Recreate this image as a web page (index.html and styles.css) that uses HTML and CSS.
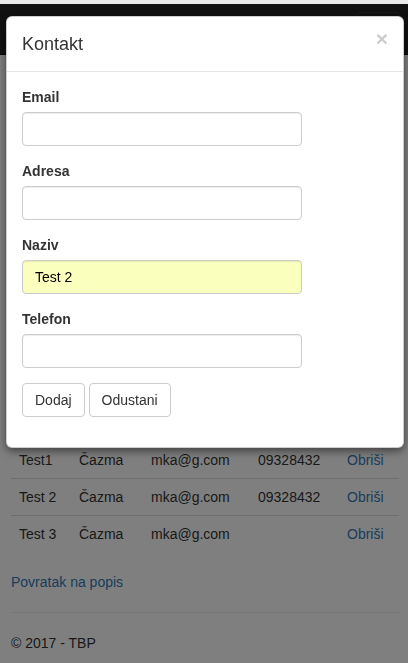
FILE: index.html
```html
<!DOCTYPE html>
<html lang="hr">
<head>
<meta charset="utf-8">
<title>Kontakt</title>
<link rel="stylesheet" href="styles.css">
</head>
<body class="modal-open">
<div class="topstrip"></div>
<nav class="navbar">
  <button class="navbar-toggle" type="button">
    <span class="icon-bar"></span><span class="icon-bar"></span><span class="icon-bar"></span>
  </button>
</nav>
<main class="container">
  <table class="table">
    <colgroup>
      <col class="c1"><col class="c2"><col class="c3"><col class="c4"><col>
    </colgroup>
    <thead>
      <tr><th>Naziv</th><th>Adresa</th><th>Email</th><th>Telefon</th><th></th></tr>
    </thead>
    <tbody>
      <tr><td>Test1</td><td>Čazma</td><td>mka@g.com</td><td>09328432</td><td><a href="#">Obriši</a></td></tr>
      <tr><td>Test 2</td><td>Čazma</td><td>mka@g.com</td><td>09328432</td><td><a href="#">Obriši</a></td></tr>
      <tr><td>Test 3</td><td>Čazma</td><td>mka@g.com</td><td></td><td><a href="#">Obriši</a></td></tr>
    </tbody>
  </table>
  <p class="back"><a href="#">Povratak na popis</a></p>
  <hr class="divider">
  <footer class="footer"><p>© 2017 - TBP</p></footer>
</main>
<div class="backdrop"></div>
<div class="modal">
  <div class="modal-header">
    <h4 class="modal-title">Kontakt</h4>
    <button class="close" type="button">×</button>
  </div>
  <form class="modal-body">
    <div class="form-group">
      <label class="control-label">Email</label>
      <input class="form-control" type="text">
    </div>
    <div class="form-group">
      <label class="control-label">Adresa</label>
      <input class="form-control" type="text">
    </div>
    <div class="form-group">
      <label class="control-label">Naziv</label>
      <input class="form-control autofilled" type="text" value="Test 2">
    </div>
    <div class="form-group">
      <label class="control-label">Telefon</label>
      <input class="form-control" type="text">
    </div>
    <div class="form-group actions">
      <button class="btn" type="button">Dodaj</button>
      <button class="btn" type="button">Odustani</button>
    </div>
  </form>
</div>
</body>
</html>
```
FILE: styles.css
```css
* { box-sizing: border-box; }
html, body { margin: 0; padding: 0; }
body {
  font-family: "Liberation Sans", Arial, Helvetica, sans-serif;
  font-size: 14px;
  line-height: 20px;
  color: #333;
  background: #fff;
}
body.modal-open { overflow: hidden; height: 663px; }
a { color: #337ab7; text-decoration: none; }

.topstrip { height: 4px; background: #e9e9e9; }

.navbar {
  height: 51px;
  background: #222;
  border-bottom: 1px solid #080808;
  display: flex;
  align-items: flex-start;
  justify-content: flex-end;
  padding: 0 8px 0 15px;
}
.navbar-toggle {
  margin-top: 8px;
  width: 44px;
  height: 34px;
  background: transparent;
  border: 1px solid #333;
  border-radius: 4px;
  padding: 9px 10px;
  display: flex;
  flex-direction: column;
  gap: 4px;
}
.icon-bar { display: block; width: 22px; height: 2px; background: #fff; border-radius: 1px; }

.container { padding: 0 9px 0 11px; }
.table {
  width: 100%;
  border-collapse: collapse;
  table-layout: fixed;
  margin: 349px 0 20px;
}
.c1 { width: 60px; }
.c2 { width: 72px; }
.c3 { width: 107px; }
.c4 { width: 89px; }
.table th {
  text-align: left;
  padding: 8px;
  line-height: 20px;
  border-bottom: 2px solid #ddd;
}
.table td {
  padding: 8px;
  line-height: 20px;
  border-top: 1px solid #ddd;
  white-space: nowrap;
}
.back { margin: 0; }
.divider { margin: 20px 0; border: 0; border-top: 1px solid #eee; height: 0; }
.footer p { margin: 0 0 10px; }

.backdrop {
  position: fixed;
  top: 4px; left: 0; right: 0; bottom: 0;
  background: rgba(0, 0, 0, 0.5);
}

.modal {
  position: absolute;
  top: 16px;
  left: 6px;
  width: 398px;
  background: #fff;
  border: 1px solid rgba(0, 0, 0, 0.2);
  border-radius: 6px;
  box-shadow: 0 3px 9px rgba(0, 0, 0, 0.5);
}
.modal-header {
  padding: 15px;
  border-bottom: 1px solid #e5e5e5;
  display: flex;
  justify-content: space-between;
  align-items: flex-start;
}
.modal-title {
  margin: 0;
  font-size: 18px;
  line-height: 24px;
  font-weight: 500;
}
.close {
  background: transparent;
  border: 0;
  padding: 0;
  margin-top: -4px;
  font-family: "Liberation Sans", Arial, sans-serif;
  font-size: 21px;
  font-weight: bold;
  line-height: 21px;
  color: #000;
  opacity: 0.2;
  text-shadow: 0 1px 0 #fff;
}
.modal-body { padding: 15px; margin: 0; }
.form-group { margin-bottom: 15px; }
.control-label {
  display: block;
  font-weight: bold;
  margin-bottom: 5px;
}
.form-control {
  display: block;
  width: 100%;
  max-width: 280px;
  height: 34px;
  padding: 6px 12px;
  font-family: inherit;
  font-size: 14px;
  line-height: 20px;
  color: #555;
  background: #fff;
  border: 1px solid #ccc;
  border-radius: 4px;
  box-shadow: inset 0 1px 1px rgba(0, 0, 0, 0.075);
}
.form-control.autofilled { background: #faffbd; color: #000; }
.actions { display: flex; gap: 4px; }
.btn {
  font-family: inherit;
  font-size: 14px;
  line-height: 20px;
  padding: 6px 12px;
  color: #333;
  background: #fff;
  border: 1px solid #ccc;
  border-radius: 4px;
}
```
